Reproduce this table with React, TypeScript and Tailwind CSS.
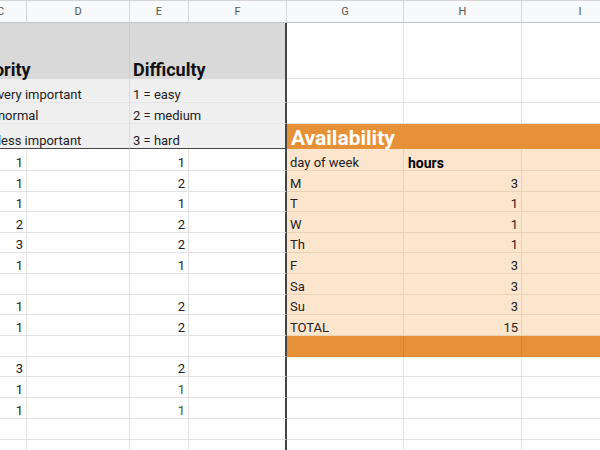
import React from 'react';

// column widths (C starts off-screen at -25px)
const C = 'w-[52px]';
const D = 'w-[103px]';
const E = 'w-[59px]';
const F = 'w-[98px]';
const G = 'w-[117px]';
const H = 'w-[118px]';
const I = 'w-[117px]';

const Cell: React.FC<{ w: string; className?: string; right?: boolean; children?: React.ReactNode }> = ({
  w,
  className = 'border-r border-b border-[#e2e2e2]',
  right,
  children,
}) => (
  <div className={`${w} shrink-0 h-full flex items-end px-[3px] ${right ? 'justify-end' : ''} ${className}`}>
    {children}
  </div>
);

type DataRow = {
  h: string;
  c?: string;
  e?: string;
  green?: boolean;
  g?: string;
  hv?: string;
  bold?: boolean;
  band?: 'light' | 'orange';
};

const rows: DataRow[] = [
  { h: 'h-[22px]', c: '1', e: '1', g: 'day of week', hv: 'hours', bold: true, band: 'light' },
  { h: 'h-[21px]', c: '1', e: '2', g: 'M', hv: '3', band: 'light' },
  { h: 'h-[20px]', c: '1', e: '1', g: 'T', hv: '1', band: 'light' },
  { h: 'h-[21px]', c: '2', e: '2', g: 'W', hv: '1', band: 'light' },
  { h: 'h-[20px]', c: '3', e: '2', g: 'Th', hv: '1', band: 'light' },
  { h: 'h-[21px]', c: '1', e: '1', g: 'F', hv: '3', band: 'light' },
  { h: 'h-[21px]', g: 'Sa', hv: '3', band: 'light' },
  { h: 'h-[20px]', c: '1', e: '2', g: 'Su', hv: '3', band: 'light' },
  { h: 'h-[21px]', c: '1', e: '2', g: 'TOTAL', hv: '15', band: 'light' },
  { h: 'h-[21px]', band: 'orange' },
  { h: 'h-[20px]', c: '3', e: '2' },
  { h: 'h-[21px]', c: '1', e: '1', green: true },
  { h: 'h-[21px]', c: '1', e: '1', green: true },
  { h: 'h-[21px]' },
  { h: 'h-[21px]' },
];

const rightCls = (band?: 'light' | 'orange') =>
  band === 'light'
    ? 'bg-[#fce5cd] border-r border-b border-[#ead2b7]'
    : band === 'orange'
    ? 'bg-[#e69138] border-r border-b border-[#d6842f]'
    : 'bg-white border-r border-b border-[#e2e2e2]';

export default function App() {
  return (
    <div className="w-[600px] h-[450px] overflow-hidden bg-white font-['Roboto',sans-serif] text-[13px] leading-[14px] text-[#222]">
      <div className="-ml-[25px] w-[700px]">
        {/* column letters */}
        <div className="flex h-[23px] bg-[#f8f9fa] border-t border-[#d4d4d4] text-[11px] text-[#555]">
          {[
            [C, 'C'],
            [D, 'D'],
            [E, 'E'],
            [F, 'F'],
            [G, 'G'],
            [H, 'H'],
            [I, 'I'],
          ].map(([w, l]) => (
            <div key={l} className={`${w} shrink-0 h-full flex items-center justify-center border-r border-b border-r-[#d6d6d6] border-b-[#c4c4c4]`}>
              {l}
            </div>
          ))}
        </div>

        {/* title row */}
        <div className="flex h-[56px] text-[18px] leading-[18px] font-bold text-[#111]">
          <Cell w={C} className="bg-[#d9d9d9]">
            <span className="relative z-10 whitespace-nowrap -ml-[7px]">Priority</span>
          </Cell>
          <Cell w={D} className="bg-[#d9d9d9] border-r border-[#cdcdcd]" />
          <Cell w={E} className="bg-[#d9d9d9]">
            <span className="relative z-10 whitespace-nowrap">Difficulty</span>
          </Cell>
          <Cell w={F} className="bg-[#d9d9d9] border-r-2 border-[#444]" />
          <Cell w={G} />
          <Cell w={H} />
          <Cell w={I} />
        </div>

        {/* legend rows */}
        {[
          ['h-[24px]', '1 = very important', '1 = easy', false],
          ['h-[21px]', '2 = normal', '2 = medium', false],
          ['h-[25px]', '3 = less important', '3 = hard', true],
        ].map(([h, p, d, last]) => (
          <div key={p as string} className={`flex ${h}`}>
            <Cell w={C} className={`bg-[#efefef] border-b ${last ? 'border-[#444]' : 'border-[#e4e4e4]'}`}>
              <span className="relative z-10 whitespace-nowrap -ml-[1px]">{p}</span>
            </Cell>
            <Cell w={D} className={`bg-[#efefef] border-r border-r-[#dcdcdc] border-b ${last ? 'border-b-[#444]' : 'border-b-[#e4e4e4]'}`} />
            <Cell w={E} className={`bg-[#efefef] border-b ${last ? 'border-[#444]' : 'border-[#e4e4e4]'}`}>
              <span className="relative z-10 whitespace-nowrap">{d}</span>
            </Cell>
            <Cell w={F} className={`bg-[#efefef] border-r-2 border-r-[#444] border-b ${last ? 'border-b-[#444]' : 'border-b-[#e4e4e4]'}`} />
            {last ? (
              <div className="w-[352px] shrink-0 h-full flex items-end px-[4px] bg-[#e69138] text-white font-bold text-[21px] leading-[22px]">
                Availability
              </div>
            ) : (
              <>
                <Cell w={G} />
                <Cell w={H} />
                <Cell w={I} />
              </>
            )}
          </div>
        ))}

        {/* data rows */}
        {rows.map((r, i) => (
          <div key={i} className={`flex ${r.h}`}>
            <Cell w={C} right>{r.c}</Cell>
            <Cell w={D} />
            <Cell w={E} right>
              <span className={r.green ? 'text-[#3e5a1c]' : ''}>{r.e}</span>
            </Cell>
            <Cell w={F} className="border-r-2 border-b border-r-[#444] border-b-[#e2e2e2]" />
            <Cell w={G} className={rightCls(r.band)}>
              <span className="whitespace-nowrap">{r.g}</span>
            </Cell>
            <Cell w={H} className={rightCls(r.band)} right={!r.bold}>
              <span className={r.bold ? 'font-bold text-[14px] text-black pl-[1px]' : ''}>{r.hv}</span>
            </Cell>
            <Cell w={I} className={rightCls(r.band)} />
          </div>
        ))}
      </div>
    </div>
  );
}
